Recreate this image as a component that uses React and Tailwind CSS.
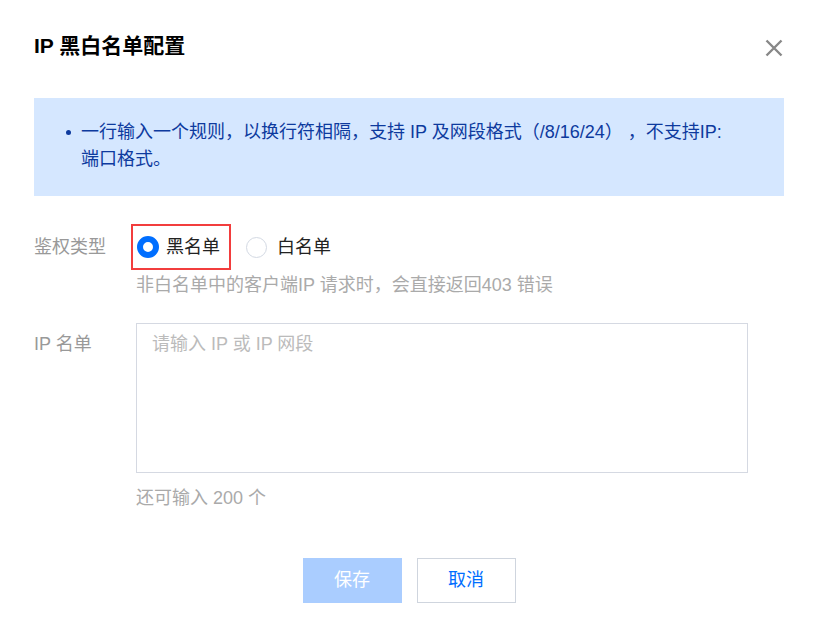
import React from "react";

const font = { fontFamily: '"Liberation Sans", "Noto Sans CJK SC", sans-serif' };

export default function App() {
  return (
    <div
      className="w-[816px] h-[633px] bg-white pl-[34px] pr-[32px] pt-[32px] text-[18px] text-[#333]"
      style={font}
    >
      {/* header */}
      <div className="flex items-center justify-between h-[28px]">
        <div className="text-[21px] font-bold leading-[28px] text-black">IP 黑白名单配置</div>
        <button className="w-[18px] h-[18px] mr-[1px] mt-[4px] flex items-center justify-center">
          <svg width="18" height="18" viewBox="0 0 18 18" fill="none">
            <path d="M1.5 1.5 L16.5 16.5 M16.5 1.5 L1.5 16.5" stroke="#888" strokeWidth="2.4" />
          </svg>
        </button>
      </div>

      {/* info alert */}
      <div className="mt-[38px] h-[98px] bg-[#d5e7ff] pl-[31px] pt-[21px] text-[#0d3a9e] leading-[27px]">
        <div className="flex">
          <div className="w-[16px] h-[27px] flex items-center">
            <span className="block w-[5px] h-[5px] rounded-full bg-[#0d3a9e] ml-[1px]" />
          </div>
          <div>
            一行输入一个规则，以换行符相隔，支持 IP 及网段格式（/8/16/24） ，不支持IP:
            <br />
            端口格式。
          </div>
        </div>
      </div>

      {/* row 1 */}
      <div className="mt-[28px] flex">
        <div className="w-[97px] h-[46px] flex items-center text-[#999] leading-[24px]">鉴权类型</div>
        <div>
          <div className="flex items-center">
            <div className="h-[46px] border-2 border-[#f23d3d] pl-[4px] pr-[9px] flex items-center gap-[7px]">
              <span className="block w-[22px] h-[22px] rounded-full border-[6px] border-[#006eff] bg-white" />
              <span className="text-[#222] leading-[24px]">黑名单</span>
            </div>
            <div className="ml-[15px] flex items-center gap-[10px]">
              <span className="block w-[21px] h-[21px] rounded-full border border-[#d3d9e3] bg-white" />
              <span className="text-[#222] leading-[24px]">白名单</span>
            </div>
          </div>
          <div className="mt-[3px] ml-[5px] leading-[24px] text-[#aaa]">
            非白名单中的客户端IP 请求时，会直接返回403 错误
          </div>
        </div>
      </div>

      {/* row 2 */}
      <div className="mt-[26px] flex">
        <div className="w-[102px] pt-[9px] leading-[24px] text-[#999]">IP 名单</div>
        <div>
          <div className="w-[612px] h-[150px] border border-[#d5d9e2] pl-[15px] pt-[8px] leading-[24px] text-[#bbb]">
            请输入 IP 或 IP 网段
          </div>
          <div className="mt-[13px] leading-[24px] text-[#aaa]">还可输入 200 个</div>
        </div>
      </div>

      {/* footer */}
      <div className="mt-[48px] flex justify-center gap-[15px]">
        <button className="w-[99px] h-[45px] bg-[#aacdff] text-white text-[18px]">保存</button>
        <button className="w-[99px] h-[45px] border border-[#cfd5de] bg-white text-[#006eff] text-[18px]">
          取消
        </button>
      </div>
    </div>
  );
}
